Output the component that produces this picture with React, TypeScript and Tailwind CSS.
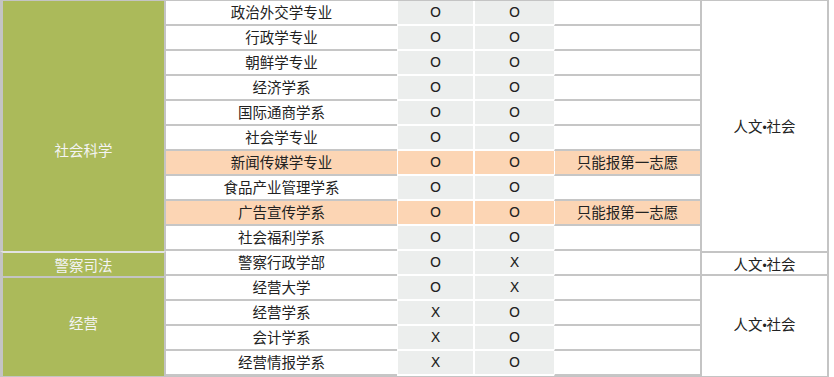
type Row = { name: string; a: string; b: string; note?: string; hl?: boolean };

const rows: Row[] = [
  { name: "政治外交学专业", a: "O", b: "O" },
  { name: "行政学专业", a: "O", b: "O" },
  { name: "朝鲜学专业", a: "O", b: "O" },
  { name: "经济学系", a: "O", b: "O" },
  { name: "国际通商学系", a: "O", b: "O" },
  { name: "社会学专业", a: "O", b: "O" },
  { name: "新闻传媒学专业", a: "O", b: "O", note: "只能报第一志愿", hl: true },
  { name: "食品产业管理学系", a: "O", b: "O" },
  { name: "广告宣传学系", a: "O", b: "O", note: "只能报第一志愿", hl: true },
  { name: "社会福利学系", a: "O", b: "O" },
  { name: "警察行政学部", a: "O", b: "X" },
  { name: "经营大学", a: "O", b: "X" },
  { name: "经营学系", a: "X", b: "O" },
  { name: "会计学系", a: "X", b: "O" },
  { name: "经营情报学系", a: "X", b: "O" },
];

const cjk = "font-['Noto_Sans_CJK_SC',sans-serif]";

const Field = () => (
  <span>
    人文<span className="font-['Liberation_Sans',sans-serif] text-[12px]">•</span>社会
  </span>
);

export default function App() {
  return (
    <div className="w-[834px] h-[377px] bg-white overflow-hidden">
      <div
        className={`grid grid-cols-[166px_231px_78px_79px_146px_129px] grid-rows-[repeat(15,25px)] border-t border-b-2 border-[#c4c4c4] w-[829px] text-[14.5px] text-[#222] ${cjk}`}
      >
        {/* category column */}
        <div className="col-start-1 row-start-1 row-span-10 bg-[#abba5a] border-l-[3px] border-r-2 border-[#c4c4c4] text-[#f4f4f4] flex justify-center pt-[138px]">
          社会科学
        </div>
        <div className="col-start-1 row-start-11 bg-[#abba5a] border-l-[3px] border-r-2 border-t-2 border-t-[#e2e2e2] border-[#c4c4c4] text-[#f4f4f4] flex items-center justify-center">
          警察司法
        </div>
        <div className="col-start-1 row-start-12 row-span-4 bg-[#abba5a] border-l-[3px] border-r-2 border-t-2 border-[#c4c4c4] text-[#f4f4f4] flex items-center justify-center pb-[8px]">
          经营
        </div>

        {/* field column */}
        <div className="col-start-6 row-start-1 row-span-10 border-x-2 border-[#c4c4c4] flex items-center justify-center">
          <Field />
        </div>
        <div className="col-start-6 row-start-11 border-x-2 border-y-2 border-[#c4c4c4] flex items-center justify-center">
          <Field />
        </div>
        <div className="col-start-6 row-start-12 row-span-4 border-x-2 border-[#c4c4c4] flex items-center justify-center pb-[4px]">
          <Field />
        </div>

        {rows.map((r, i) => (
          <div key={i} className="contents">
            <div
              className={`border-b-2 border-[#c6c6c6] flex items-center justify-center pb-[1px] ${r.hl ? "bg-[#fcd5b4]" : "bg-white"}`}
            >
              {r.name}
            </div>
            <div
              className={`border-b-2 border-l border-r-2 border-white flex items-center justify-center pb-[1px] font-['DejaVu_Sans',sans-serif] text-[14px] ${r.hl ? "bg-[#fcd5b4]" : "bg-[#eceeed]"}`}
            >
              {r.a}
            </div>
            <div
              className={`border-b-2 border-white flex items-center justify-center pb-[1px] font-['DejaVu_Sans',sans-serif] text-[14px] ${r.hl ? "bg-[#fcd5b4]" : "bg-[#eceeed]"}`}
            >
              {r.b}
            </div>
            <div
              className={`border-b-2 border-l border-l-white border-[#c6c6c6] flex items-center justify-center pb-[1px] ${r.hl ? "bg-[#fcd5b4]" : "bg-white"}`}
            >
              {r.note ?? ""}
            </div>
          </div>
        ))}
      </div>
    </div>
  );
}
